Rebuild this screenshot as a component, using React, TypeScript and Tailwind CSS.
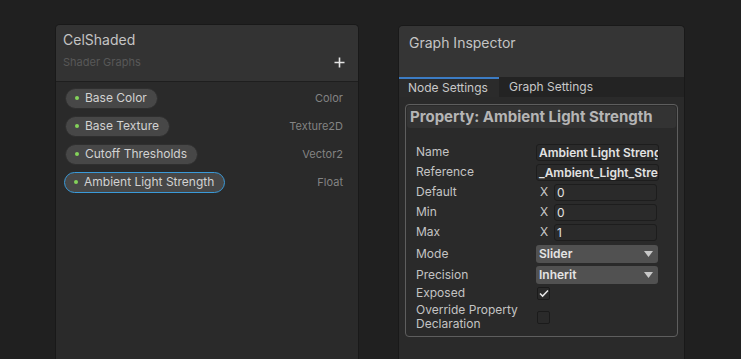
import type { ReactNode } from 'react'

type Prop = { name: string; type: string; active?: boolean }

const props: Prop[] = [
  { name: 'Base Color', type: 'Color' },
  { name: 'Base Texture', type: 'Texture2D' },
  { name: 'Cutoff Thresholds', type: 'Vector2' },
  { name: 'Ambient Light Strength', type: 'Float', active: true },
]

const Row = ({ label, children, h = 'h-[20px]' }: { label: ReactNode; children?: ReactNode; h?: string }) => (
  <div className={`flex items-center ${h}`}>
    <div className="w-[120px] shrink-0 text-[12px] leading-[14px] text-[#c4c4c4]">{label}</div>
    <div className="flex-1 flex items-center">{children}</div>
  </div>
)

const TextField = ({ value }: { value: string }) => (
  <div className="w-[123px] h-[17px] bg-[#2a2a2a] border border-[#1d1d1d] rounded-[3px] px-[2px] overflow-hidden whitespace-nowrap text-[12px] leading-[15px] font-semibold text-[#e2e2e2]">
    {value}
  </div>
)

const VecField = ({ value }: { value: string }) => (
  <div className="flex items-center">
    <span className="w-[18px] pl-[4px] text-[12px] text-[#c8c8c8]">X</span>
    <div className="w-[103px] h-[17px] bg-[#2a2a2a] border border-[#1d1d1d] rounded-[3px] px-[2px] text-[12px] leading-[15px] text-[#e2e2e2]">
      {value}
    </div>
  </div>
)

const Dropdown = ({ value }: { value: string }) => (
  <div className="w-[122px] h-[18px] bg-[#515151] rounded-[3px] pl-[3px] pr-[5px] flex items-center justify-between text-[12px] font-semibold text-[#e4e4e4]">
    <span>{value}</span>
    <svg width="9" height="6" viewBox="0 0 9 6">
      <path d="M0 0h9L4.5 6z" fill="#c8c8c8" />
    </svg>
  </div>
)

const Checkbox = ({ checked }: { checked?: boolean }) => (
  <div className="ml-[1px] w-[13px] h-[13px] bg-[#2a2a2a] border border-[#1b1b1b] rounded-[2px] flex items-center justify-center">
    {checked && (
      <svg width="10" height="9" viewBox="0 0 10 9">
        <path d="M1 4.5l2.6 2.6L9 1.5" stroke="#e6e6e6" strokeWidth="1.5" fill="none" />
      </svg>
    )}
  </div>
)

export default function App() {
  return (
    <div
      className="w-[741px] h-[359px] overflow-hidden bg-[#202020] flex items-start"
      style={{ fontFamily: 'Inter, "Noto Sans", sans-serif' }}
    >
      {/* blackboard */}
      <div className="ml-[55px] mt-[24px] w-[304px] h-[335px] flex flex-col border-x border-t border-[#191919] rounded-t-[5px] bg-[#2a2a2a] overflow-hidden">
        <div className="h-[57px] bg-[#333333] border-b border-[#1e1e1e] pl-[7px] pr-[13px] pt-[5px] flex flex-col">
          <div className="text-[14px] leading-[20px] text-[#c4c4c4]">CelShaded</div>
          <div className="mt-[2px] flex items-center justify-between">
            <span className="text-[11px] leading-[20px] text-[#585858]">Shader Graphs</span>
            <svg width="11" height="11" viewBox="0 0 11 11">
              <path d="M5.5 0.5v10M0.5 5.5h10" stroke="#e4e4e4" strokeWidth="1.6" />
            </svg>
          </div>
        </div>
        <div className="pt-[2px] pl-[9px] pr-[15px] flex flex-col">
          {props.map((p) => (
            <div key={p.name} className="h-[28px] flex items-center justify-between">
              <div
                className={`h-[21px] rounded-full bg-[#474747] flex items-center pl-[9px] pr-[10px] gap-[6px] border ${
                  p.active ? 'border-[#3a9ad9] ml-[-1px]' : 'border-[#2f2f2f]'
                }`}
              >
                <span className="w-[4px] h-[4px] rounded-full bg-[#84d35a]" />
                <span className="text-[12px] text-[#d2d2d2]">{p.name}</span>
              </div>
              <span className="text-[11px] text-[#838383]">{p.type}</span>
            </div>
          ))}
        </div>
      </div>

      {/* inspector */}
      <div className="ml-[39px] mt-[25px] w-[287px] h-[334px] flex flex-col border-x border-t border-[#191919] rounded-t-[5px] bg-[#2a2a2a] overflow-hidden">
        <div className="h-[51px] bg-[#353535] pl-[10px] pt-[7px] text-[14px] leading-[20px] text-[#c4c4c4]">
          Graph Inspector
        </div>
        <div className="h-[20px] bg-[#232323] flex text-[12px] text-[#c8c8c8]">
          <div className="w-[100px] bg-[#2b2b2b] border-t-2 border-[#3c7cc4] pl-[9px] leading-[17px]">Node Settings</div>
          <div className="pl-[10px] leading-[19px]">Graph Settings</div>
        </div>
        <div className="pt-[7px] px-[6px]">
          <div className="h-[233px] border border-[#5e5e5e] rounded-[4px] p-[1px] flex flex-col">
            <div className="h-[22px] bg-[#333333] rounded-[3px] pl-[3px] text-[15px] leading-[22px] font-bold text-[#b5b5b5]">
              Property: Ambient Light Strength
            </div>
            <div className="pt-[14px] pl-[9px] flex flex-col">
              <Row label="Name">
                <TextField value="Ambient Light Strength" />
              </Row>
              <Row label="Reference">
                <TextField value="_Ambient_Light_Strength" />
              </Row>
              <Row label="Default">
                <VecField value="0" />
              </Row>
              <Row label="Min">
                <VecField value="0" />
              </Row>
              <Row label="Max">
                <VecField value="1" />
              </Row>
              <Row label="Mode" h="h-[21px] mt-[1px]">
                <Dropdown value="Slider" />
              </Row>
              <Row label="Precision" h="h-[21px]">
                <Dropdown value="Inherit" />
              </Row>
              <Row label="Exposed" h="h-[18px] mt-[-1px]">
                <Checkbox checked />
              </Row>
              <Row label={<>Override Property<br />Declaration</>} h="h-[30px]">
                <Checkbox />
              </Row>
            </div>
          </div>
        </div>
      </div>
    </div>
  )
}
